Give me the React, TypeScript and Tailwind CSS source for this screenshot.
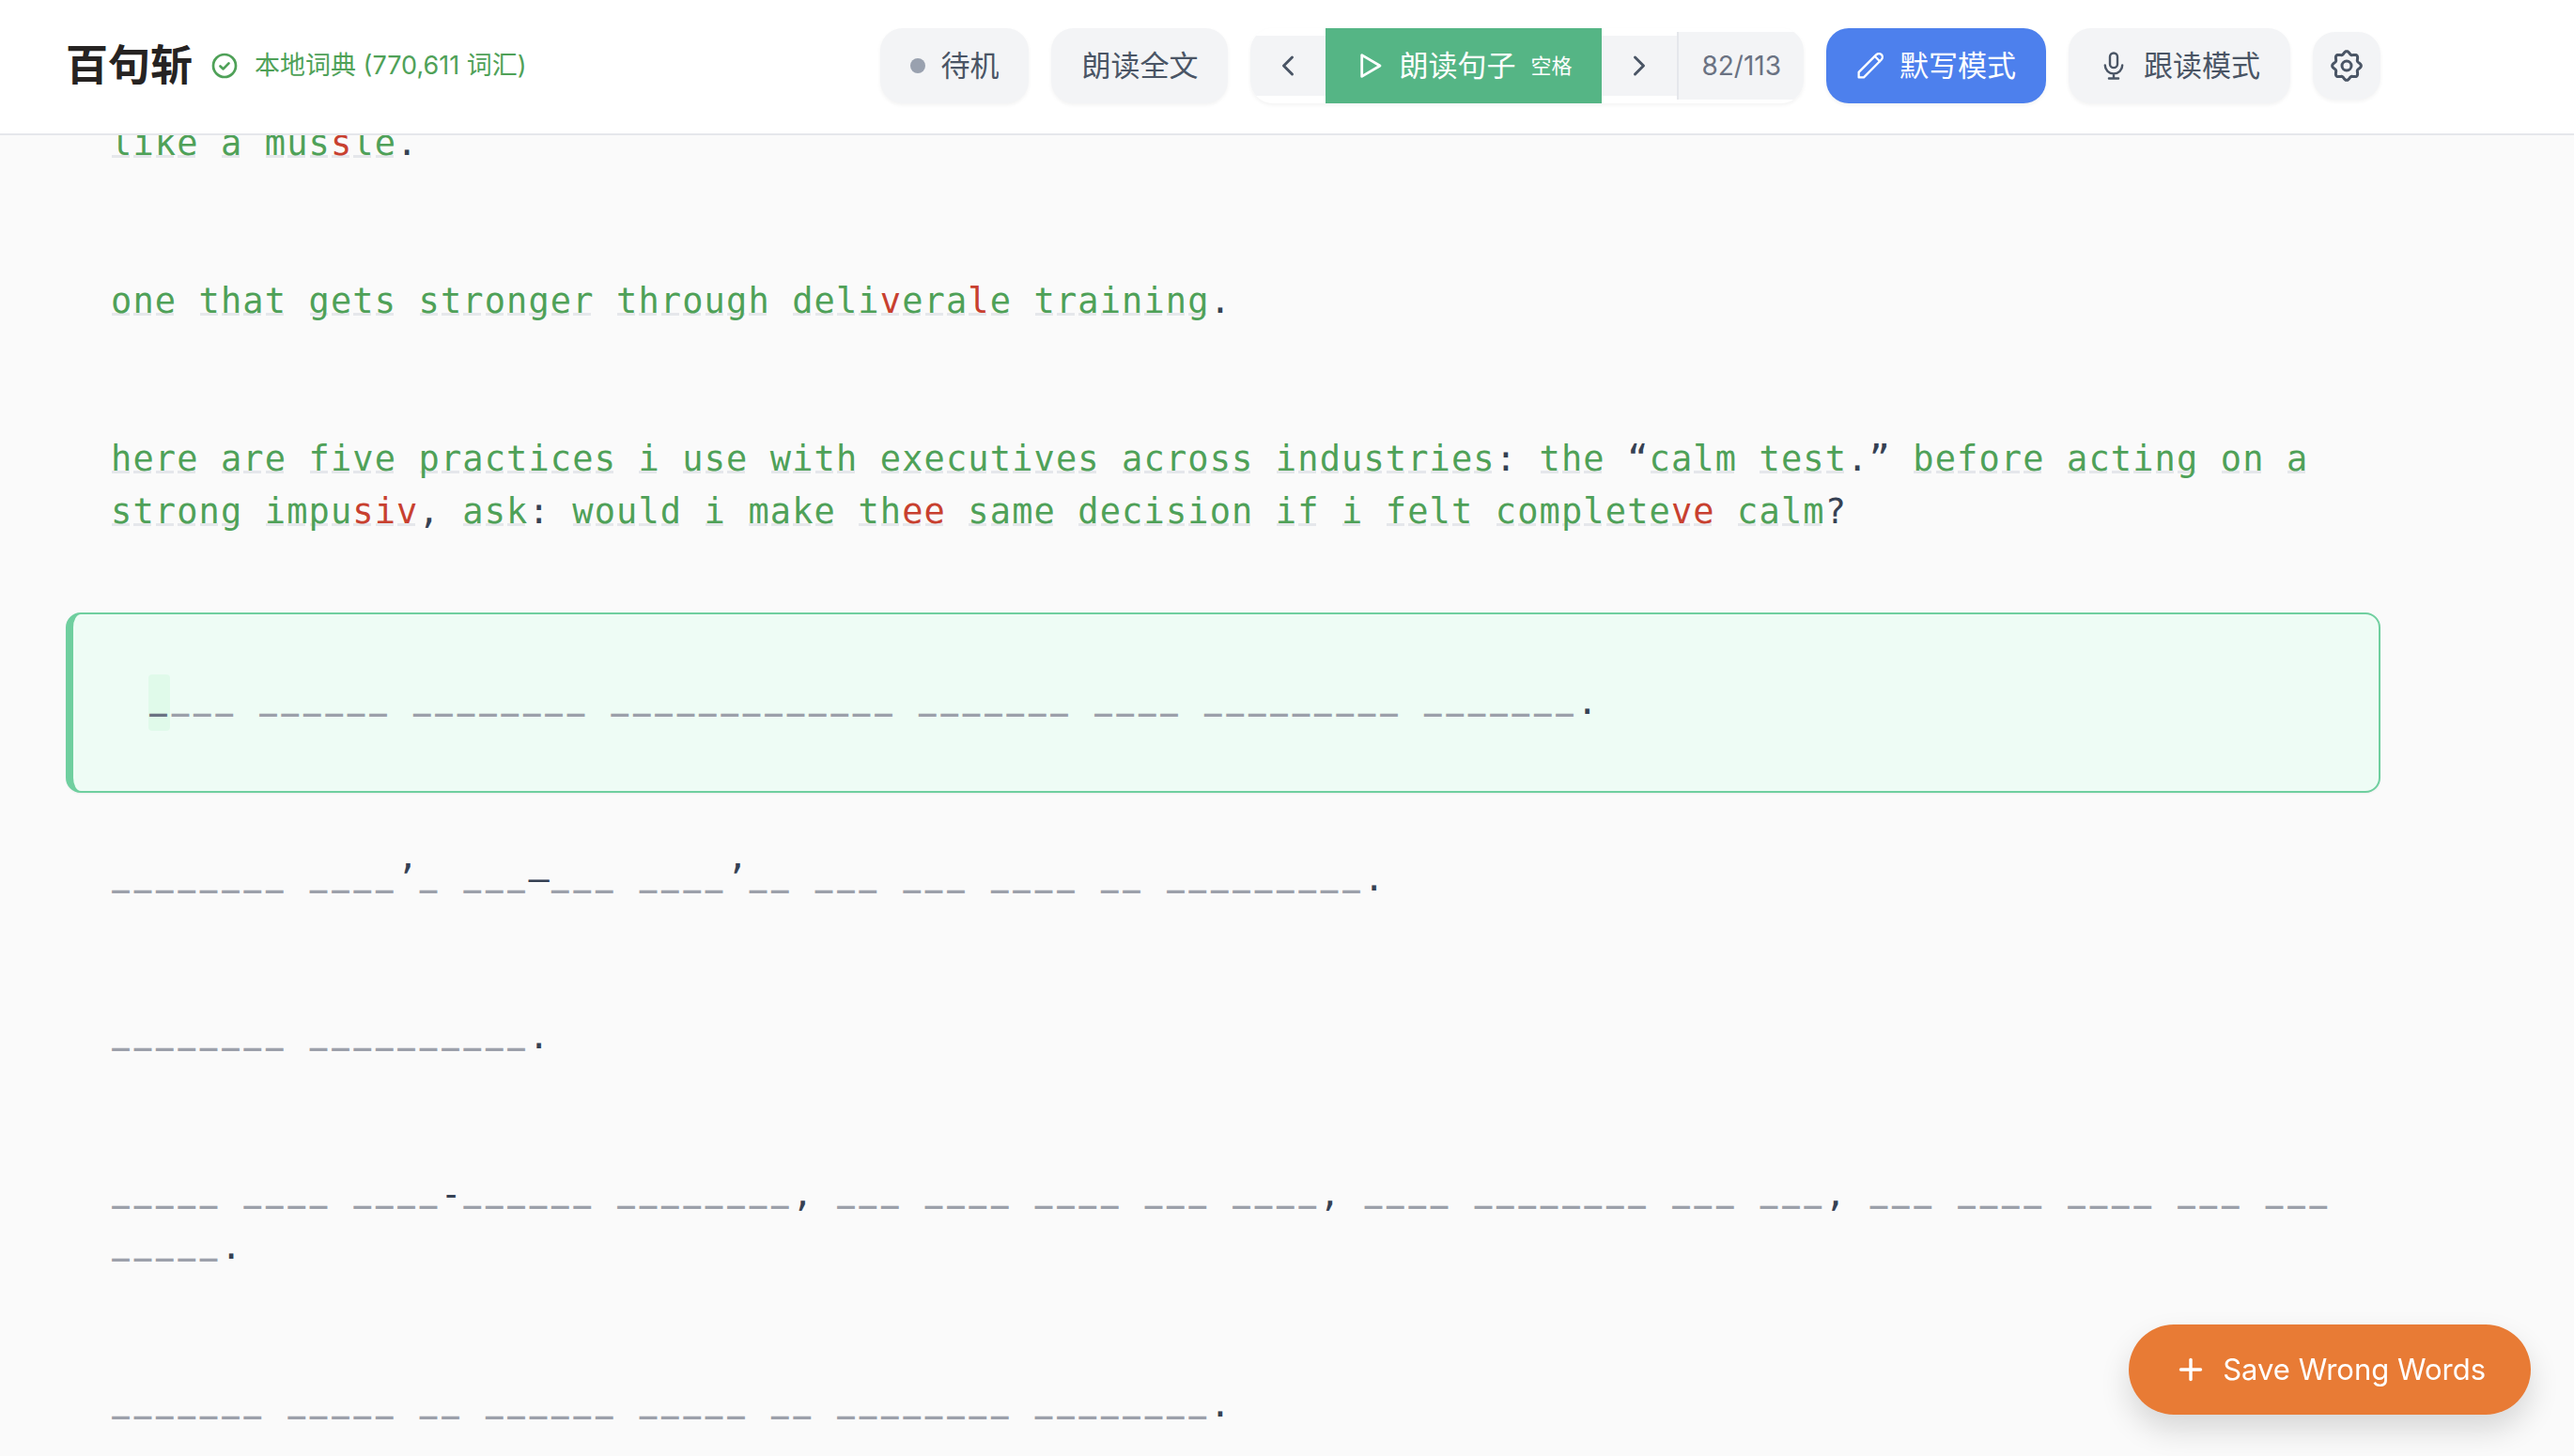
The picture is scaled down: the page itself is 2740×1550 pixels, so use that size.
import type { ReactNode } from "react";
import { ChevronLeft, ChevronRight, Plus } from "lucide-react";

const gearOutline =
  Array.from({ length: 96 }, (_, i) => {
    const angle = (i / 96) * Math.PI * 2;
    const radius = 13.9 + 1.5 * Math.cos(angle * 8);
    return `${i ? "L" : "M"}${(radius * Math.cos(angle)).toFixed(2)} ${(radius * Math.sin(angle)).toFixed(2)}`;
  }).join("") + "Z";

function Icon({ viewBox, stroke, className, children }: { viewBox: string; stroke: number; className: string; children: ReactNode }) {
  return (
    <svg
      viewBox={viewBox}
      className={className}
      fill="none"
      stroke="currentColor"
      strokeWidth={stroke}
      strokeLinecap="round"
      strokeLinejoin="round"
      aria-hidden="true"
    >
      {children}
    </svg>
  );
}

const CheckIcon = () => (
  <Icon viewBox="0 0 32 32" stroke={2.7} className="size-8">
    <circle cx="16" cy="16" r="12" />
    <path d="M11.5 16.4l3.2 3 5.8-6" />
  </Icon>
);

const PlayIcon = () => (
  <Icon viewBox="0 0 30 30" stroke={2.8} className="size-[30px]">
    <path d="M6.7 3.6v22.8L26 15z" />
  </Icon>
);

const PencilIcon = () => (
  <Icon viewBox="0 0 24 24" stroke={1.8} className="size-[30px]">
    <path d="M2.1 21.9v-4.4l15-15a3.04 3.04 0 0 1 4.3 4.3L6.4 21.9z" />
    <path d="M15.8 4l4.2 4.2" />
  </Icon>
);

const MicIcon = () => (
  <Icon viewBox="0 0 24 24" stroke={1.8} className="size-8">
    <rect x="9" y="1.9" width="6" height="11.7" rx="3" />
    <path d="M5.1 11.6a6.9 6.7 0 0 0 13.8 0M12 18.3v3.8M8.2 22.1h7.6" />
  </Icon>
);

const GearIcon = () => (
  <Icon viewBox="-18 -18 36 36" stroke={3} className="size-9">
    <path d={gearOutline} />
    <circle r="5" />
  </Icon>
);

// "_" is a blank still to fill in, [brackets] wrap letters typed wrongly.
const sentences: { text: string; active?: boolean }[] = [
  { text: "like a mus[s]le." },
  { text: "one that gets stronger through deli[v]era[l]e training." },
  {
    text: "here are five practices i use with executives across industries: the “calm test.” before acting on a strong impu[siv], ask: would i make th[ee] same decision if i felt complete[ve] calm?",
  },
  { text: "____ ______ ________ _____________ _______ ____ _________ _______.", active: true },
  { text: "________ ____’_ ___–___ ____’__ ___ ___ ____ __ _________." },
  { text: "________ __________." },
  {
    text: "_____ ____ ____-______ ________, ___ ____ ____ ___ ____, ____ ________ ___ ___, ___ ____ ____ ___ ___ _____.",
  },
  { text: "_______ _____ __ ______ _____ __ ________ ________." },
];

const cell = "relative inline-block h-14 w-[1ch] leading-14";
const glyph = "font-['DejaVu_Sans_Mono',monospace] text-[37px] leading-none";

function Letter({ char, wrong, cursor }: { char: string; wrong: boolean; cursor: boolean }) {
  if (char === "_") {
    return (
      <span
        className={
          cursor
            ? `${cell} pl-px text-gray-500 before:absolute before:inset-x-0 before:-top-1 before:bottom-0 before:-z-10 before:rounded-sm before:bg-[#e0faea]`
            : `${cell} pl-px text-[#9ca0aa]`
        }
      >
        <span className="font-[Roboto,sans-serif] text-[42px] leading-none">_</span>
      </span>
    );
  }
  if (/[a-z]/.test(char)) {
    return (
      <span
        className={`${cell} ${wrong ? "text-[#c8402f]" : "text-[#4fa158]"} before:absolute before:top-[38px] before:left-px before:-z-10 before:h-[3px] before:w-[19px] before:bg-gray-200`}
      >
        <span className={glyph}>{char}</span>
      </span>
    );
  }
  return (
    <span className={cell}>
      <span className={glyph}>{char}</span>
    </span>
  );
}

function Sentence({ text, active }: { text: string; active?: boolean }) {
  let wrong = false;
  return (
    <p
      className={
        active
          ? "isolate mt-[21px] mb-[10px] rounded-2xl border-2 border-l-8 border-[#6fcf9f] bg-[#eefcf5] pt-[68px] pr-12 pb-16 pl-20 shadow-xs"
          : "px-12 py-14"
      }
    >
      {text.split(" ").map((word, w) => (
        <span key={w}>
          {w > 0 && " "}
          <span className="whitespace-nowrap">
            {[...word].map((char, c) => {
              if (char === "[" || char === "]") {
                wrong = char === "[";
                return null;
              }
              return <Letter key={c} char={char} wrong={wrong} cursor={!!active && w === 0 && c === 0} />;
            })}
          </span>
        </span>
      ))}
    </p>
  );
}

const soft = "flex h-20 items-center gap-4 rounded-3xl bg-gray-100 px-8 shadow-[0_2px_4px_rgba(0,0,0,0.05)]";

export default function App() {
  return (
    <div className="h-screen overflow-hidden bg-[#fafafa] font-[Inter,'Noto_Sans_CJK_SC',sans-serif] text-[31px] text-gray-600">
      <header className="sticky top-0 z-10 flex h-36 items-center justify-between border-b-2 border-gray-200 bg-white pr-[206px] pb-0.5 pl-[70px]">
        <div className="flex items-center gap-[18px]">
          <h1 className="text-[45px] font-bold text-[#262322]">百句斩</h1>
          <p className="flex items-center gap-4 text-[27px] text-[#4fa158]">
            <CheckIcon />
            本地词典 (770,611 词汇)
          </p>
        </div>
        <div className="flex items-center gap-6">
          <button className={soft}>
            <span className="size-4 rounded-full bg-gray-400" />
            待机
          </button>
          <button className={soft}>朗读全文</button>
          <div className="flex items-center overflow-hidden rounded-3xl shadow-[0_2px_4px_rgba(0,0,0,0.05)]">
            <button aria-label="上一句" className="grid h-16 w-20 place-items-center bg-gray-100">
              <ChevronLeft className="size-9" />
            </button>
            <button className="flex h-20 items-center gap-4 bg-[#55b585] px-8 text-white">
              <PlayIcon />
              朗读句子
              <span className="text-[22px]">空格</span>
            </button>
            <button aria-label="下一句" className="grid h-16 w-20 place-items-center bg-gray-100">
              <ChevronRight className="size-9" />
            </button>
            <span className="flex h-18 items-center border-l-2 border-gray-200 bg-gray-100 px-6 text-[28px] text-gray-500">
              82/113
            </span>
          </div>
          <button className="flex h-20 items-center gap-4 rounded-3xl bg-[#4d80ed] px-8 text-white shadow-[0_2px_4px_rgba(0,0,0,0.05)]">
            <PencilIcon />
            默写模式
          </button>
          <button className={soft}>
            <MicIcon />
            跟读模式
          </button>
          <button
            aria-label="设置"
            className="grid size-18 place-items-center rounded-3xl bg-gray-100 shadow-[0_2px_4px_rgba(0,0,0,0.05)]"
          >
            <GearIcon />
          </button>
        </div>
      </header>
      <main className="isolate -mt-[73px] pr-[206px] pl-[70px] font-['Liberation_Mono',monospace] text-[39px] leading-14 text-gray-700">
        {sentences.map((sentence, i) => (
          <Sentence key={i} {...sentence} />
        ))}
      </main>
      <button className="fixed right-[46px] bottom-[44px] z-20 flex h-24 items-center gap-4 rounded-full bg-[#e87b35] px-12 text-[31px] text-white shadow-[0_16px_32px_rgba(0,0,0,0.14)]">
        <Plus className="size-9" strokeWidth={2.3} />
        Save Wrong Words
      </button>
    </div>
  );
}
